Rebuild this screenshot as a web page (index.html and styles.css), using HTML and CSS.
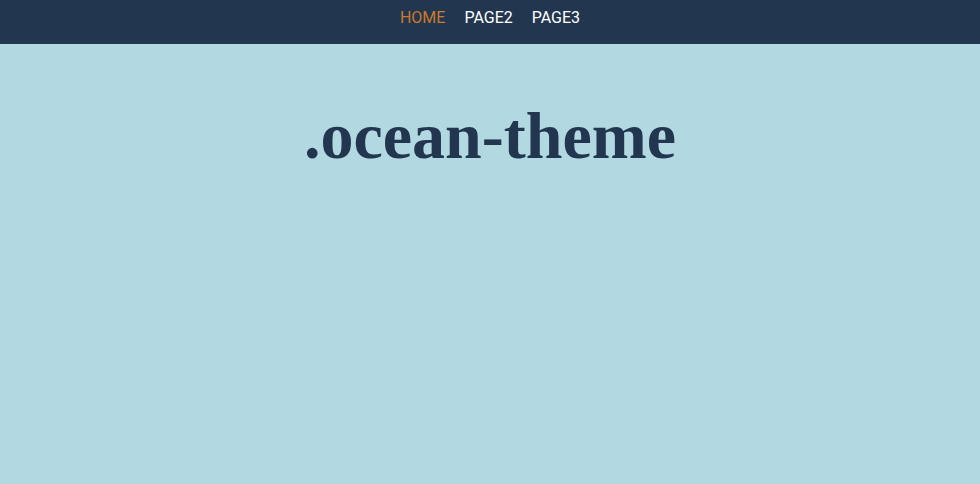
FILE: index.html
```
<!DOCTYPE html>
<html>
<head>
<meta charset="utf-8">
<link rel="stylesheet" href="styles.css">
</head>
<body>
<nav class="nav">
  <a class="nav-link active" href="#">HOME</a>
  <a class="nav-link" href="#">PAGE2</a>
  <a class="nav-link" href="#">PAGE3</a>
</nav>
<main class="main">
  <h1 class="title">.ocean-theme</h1>
</main>
</body>
</html>
```
FILE: styles.css
```
html, body {
  margin: 0;
  padding: 0;
  height: 100%;
}
body {
  background: #b2d9e1;
}
.nav {
  height: 44px;
  background: #22364f;
  display: flex;
  justify-content: center;
  align-items: flex-start;
  gap: 19px;
  padding-top: 7px;
  box-sizing: border-box;
}
.nav-link {
  font-family: "Roboto", "Liberation Sans", sans-serif;
  font-size: 16px;
  line-height: 22px;
  color: #ffffff;
  text-decoration: none;
}
.nav-link.active {
  color: #cc7a2a;
}
.main {
  display: flex;
  justify-content: center;
  padding-top: 52px;
}
.title {
  margin: 0;
  font-family: "Liberation Serif", "DejaVu Serif", serif;
  font-weight: bold;
  font-size: 66px;
  line-height: 80px;
  color: #22364f;
}
```
